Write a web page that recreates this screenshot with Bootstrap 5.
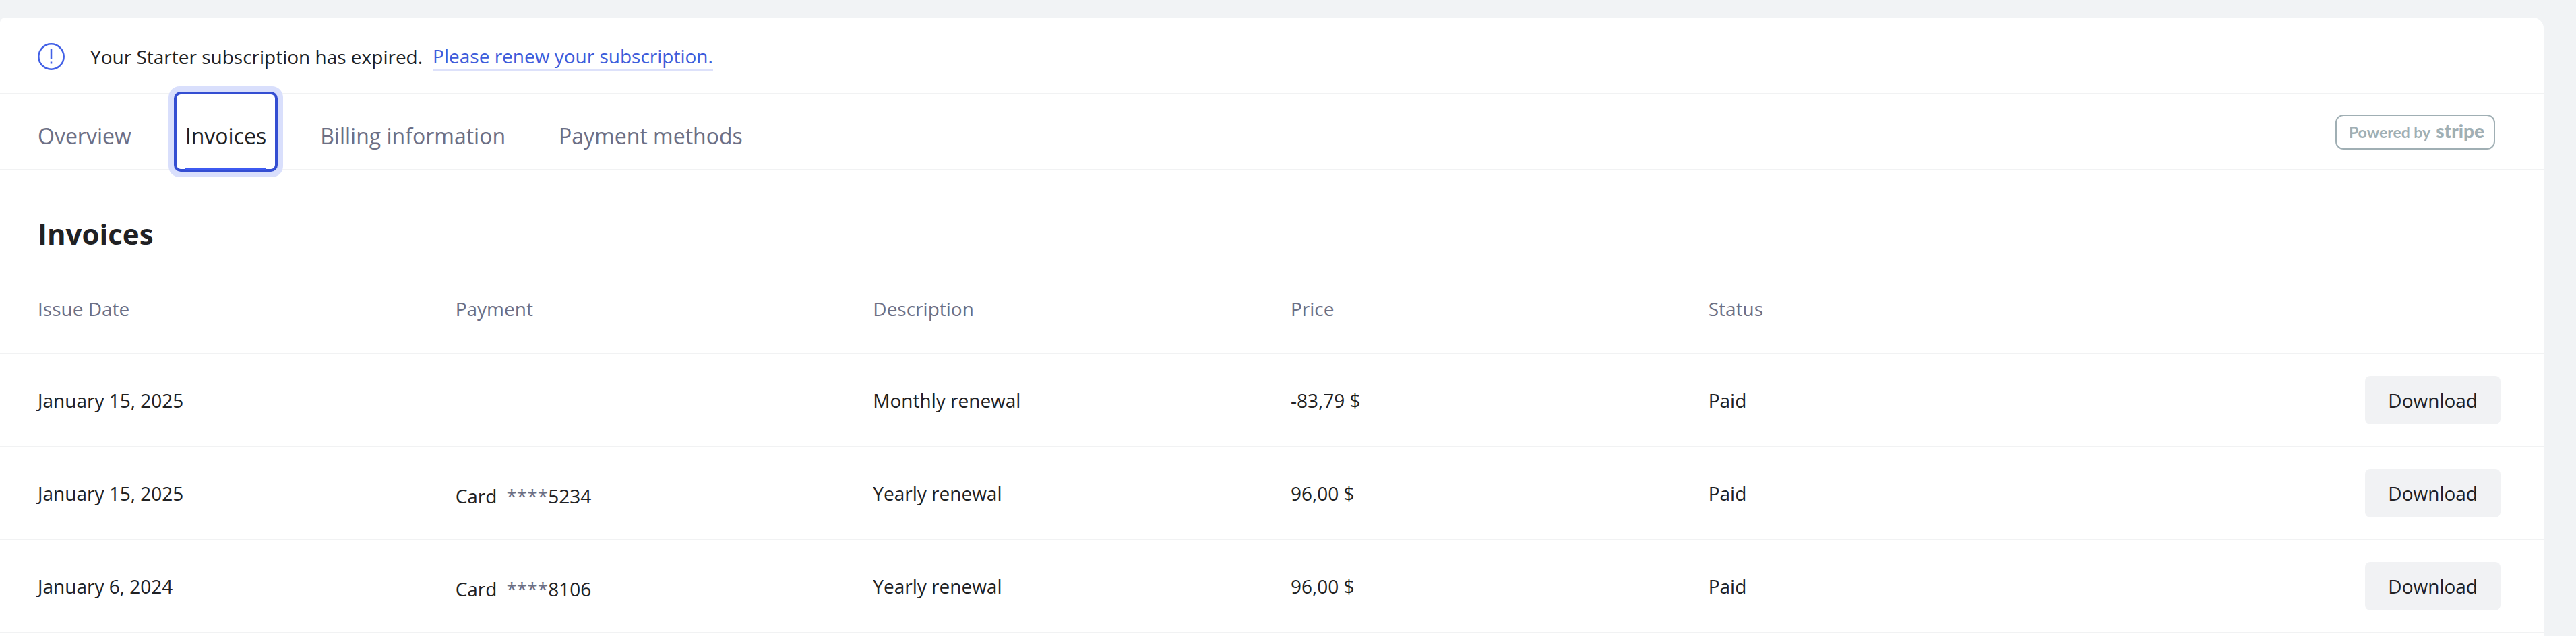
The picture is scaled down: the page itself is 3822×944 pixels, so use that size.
<!DOCTYPE html>
<html lang="en">
<head>
<meta charset="utf-8">
<meta name="viewport" content="width=device-width, initial-scale=1">
<title>Invoices</title>
<link href="https://cdn.jsdelivr.net/npm/bootstrap@5.3.0/dist/css/bootstrap.min.css" rel="stylesheet">
<style>
body{background:#f1f3f5;color:#202124;font-family:"Open Sans",sans-serif;font-size:28px;line-height:40px;overflow-x:hidden}
.page{padding:26px 48px 0 0}
.panel{background:#fff;border-radius:8px 16px 0 0}
.notice{padding:37px 56px 33px;border-bottom:2px solid #f1f2f3}
.notice svg{width:40px;height:40px;margin-right:38px;flex:none}
.renew{color:#3d5cdb;text-decoration:none;border-bottom:2px solid #dde1fa;margin-left:15px}
.tabs{padding:0 72px 0 44px;border-bottom:2px solid #f1f2f3;gap:55px}
.tab-link{color:#6c6f85;font-size:32px;line-height:44px;text-decoration:none;padding:40px 12px 27px}
.tab-link.active{color:#202124;position:relative;border-radius:6px;box-shadow:0 0 0 4px #344ed2,0 0 0 12px #d9dffc;padding-left:13px;padding-right:13px}
.tab-link.active::after{content:"";position:absolute;left:13px;right:13px;bottom:-2px;height:4px;background:#3d5af1}
.stripe{border:2px solid #a0afb4;border-radius:12px;color:#a0afb4;padding:0 14px 0 18px;font-family:Lato,sans-serif;font-weight:700;font-size:23px;line-height:44px;height:52px;gap:8px}
.stripe b{font-weight:900;font-size:28px}
h1{font-size:42px;font-weight:700;line-height:56px;margin:0;padding:66px 56px 16px}
.invoices{width:100%}
.invoices tr{display:grid;grid-template-columns:repeat(6,minmax(0,1fr));align-items:center;padding-left:56px;border-bottom:2px solid #f1f2f3;height:138px}
.invoices thead tr{height:135px}
.invoices th,.invoices td{padding:0}
.invoices th{font-weight:400;color:#6c6f85}
.invoices .method{padding-top:8px}
.invoices .action{text-align:right;padding-right:64px}
.stars{color:#6c6f85;margin-left:14px}
.btn-download{background:#f1f2f4;font-size:28px;line-height:40px;padding:16px 34px;border:0;border-radius:8px;color:#202124}
</style>
</head>
<body>
<div class="page min-vh-100 d-flex flex-column">
<main class="panel flex-grow-1">
<div class="notice d-flex align-items-center">
<svg viewBox="0 0 40 40" fill="none" stroke="#4260e6" stroke-width="2.5" aria-hidden="true"><circle cx="20" cy="20" r="18.7"/><path d="M20 8v16M20 27.5v3"/></svg>
<span>Your Starter subscription has expired.</span><a class="renew" href="#">Please renew your subscription.</a>
</div>
<nav class="tabs d-flex">
<a class="tab-link" href="#">Overview</a><a class="tab-link active" aria-current="page" href="#">Invoices</a><a class="tab-link" href="#">Billing information</a><a class="tab-link" href="#">Payment methods</a>
<a class="stripe d-flex align-items-baseline ms-auto my-auto text-decoration-none" href="#"><span>Powered by</span><b>stripe</b></a>
</nav>
<h1>Invoices</h1>
<table class="invoices">
<thead><tr><th>Issue Date</th><th>Payment</th><th>Description</th><th>Price</th><th>Status</th><th></th></tr></thead>
<tbody>
<tr><td>January 15, 2025</td><td></td><td>Monthly renewal</td><td>-83,79 $</td><td>Paid</td><td class="action"><button class="btn btn-download" type="button">Download</button></td></tr>
<tr><td>January 15, 2025</td><td class="method">Card<span class="stars">****</span>5234</td><td>Yearly renewal</td><td>96,00 $</td><td>Paid</td><td class="action"><button class="btn btn-download" type="button">Download</button></td></tr>
<tr><td>January 6, 2024</td><td class="method">Card<span class="stars">****</span>8106</td><td>Yearly renewal</td><td>96,00 $</td><td>Paid</td><td class="action"><button class="btn btn-download" type="button">Download</button></td></tr>
</tbody>
</table>
</main>
</div>
<script src="https://cdn.jsdelivr.net/npm/bootstrap@5.3.0/dist/js/bootstrap.bundle.min.js"></script>
</body>
</html>
